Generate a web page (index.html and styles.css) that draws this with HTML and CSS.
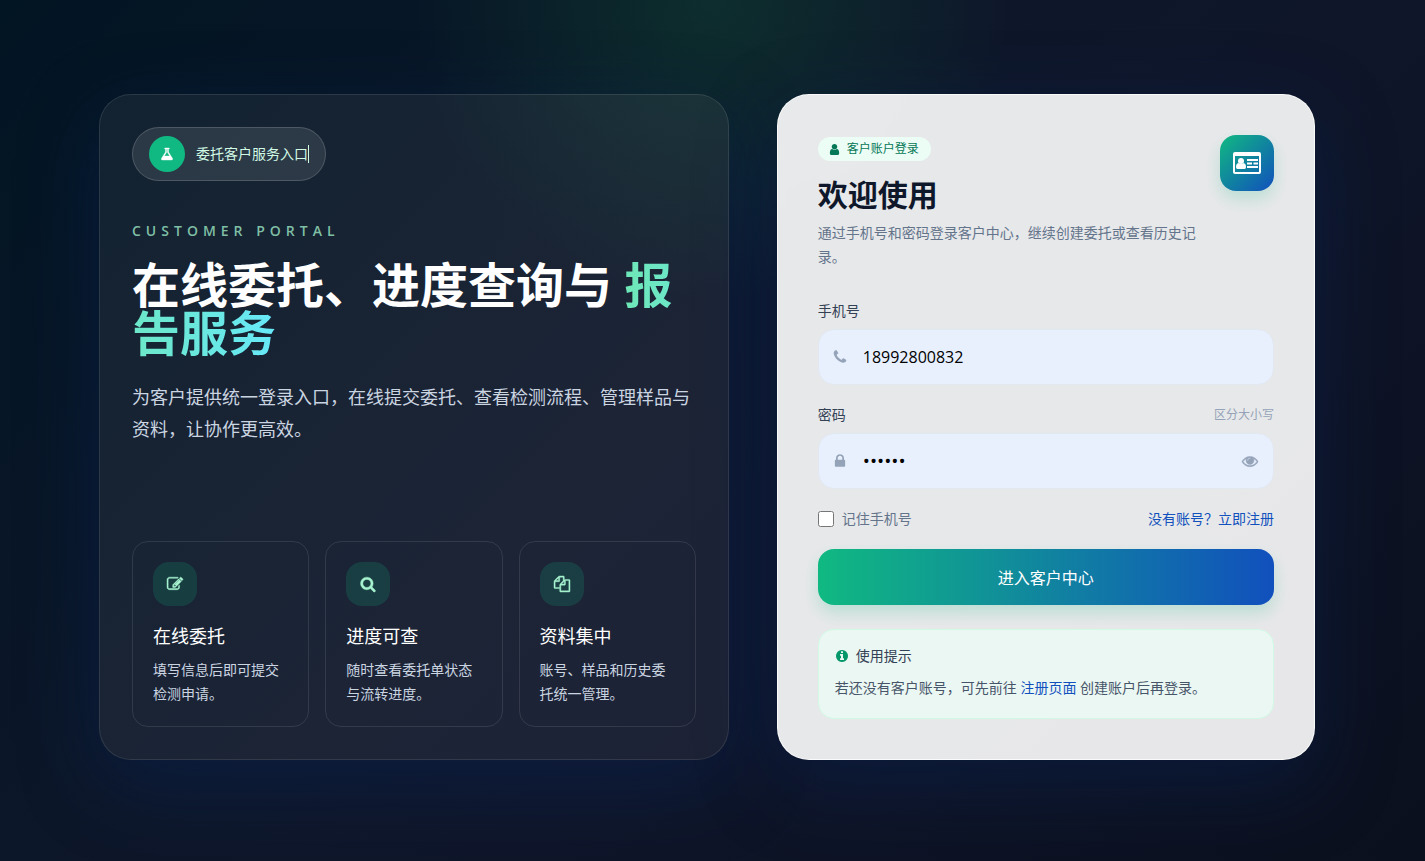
FILE: index.html
```html
<!DOCTYPE html>
<html lang="zh-CN">

<head>
    <meta charset="UTF-8">
    <meta name="viewport" content="width=device-width, initial-scale=1.0">
    <title>客户账户登录</title>
    <link rel="stylesheet" href="styles.css">
</head>

<body>
    <main class="page">
        <section class="intro">
            <div>
                <div class="badge">
                    <span class="badge-icon">
                        <svg class="icon icon-bold" viewBox="0 0 1792 1792"><path d="M1591 1448q56 89 21.5 152.5t-140.5 63.5h-1152q-106 0-140.5-63.5t21.5-152.5l503-793v-399h-64q-26 0-45-19t-19-45 19-45 45-19h512q26 0 45 19t19 45-19 45-45 19h-64v399zm-779-725l-272 429h712l-272-429-20-31v-436h-128v436z"/></svg>
                    </span>
                    <span class="typing">委托客户服务入口</span>
                </div>
                <p class="eyebrow">CUSTOMER PORTAL</p>
                <h1 class="headline">在线委托、进度查询与 <span class="headline-accent">报告服务</span></h1>
                <p class="lead">为客户提供统一登录入口，在线提交委托、查看检测流程、管理样品与资料，让协作更高效。</p>
            </div>

            <div class="features">
                <article class="feature">
                    <div class="feature-icon">
                        <svg class="icon icon-bold" viewBox="0 0 1792 1792"><path d="M888 1184l116-116-152-152-116 116v56h96v96h56zm440-720q-16-16-33 1l-350 350q-17 17-1 33t33-1l350-350q17-17 1-33zm80 594v190q0 119-84.5 203.5t-203.5 84.5h-832q-119 0-203.5-84.5t-84.5-203.5v-832q0-119 84.5-203.5t203.5-84.5h832q63 0 117 25 15 7 18 23 3 17-9 29l-49 49q-14 14-32 8-23-6-45-6h-832q-66 0-113 47t-47 113v832q0 66 47 113t113 47h832q66 0 113-47t47-113v-126q0-13 9-22l64-64q15-15 35-7t20 29zm-96-738l288 288-672 672h-288v-288zm444 132l-92 92-288-288 92-92q28-28 68-28t68 28l152 152q28 28 28 68t-28 68z"/></svg>
                    </div>
                    <h2 class="feature-title">在线委托</h2>
                    <p class="feature-text">填写信息后即可提交检测申请。</p>
                </article>
                <article class="feature">
                    <div class="feature-icon">
                        <svg class="icon icon-bold" viewBox="0 0 1792 1792"><path d="M1216 832q0-185-131.5-316.5t-316.5-131.5-316.5 131.5-131.5 316.5 131.5 316.5 316.5 131.5 316.5-131.5 131.5-316.5zm512 832q0 52-38 90t-90 38q-54 0-90-38l-343-342q-179 124-399 124-143 0-273.5-55.5t-225-150-150-225-55.5-273.5 55.5-273.5 150-225 225-150 273.5-55.5 273.5 55.5 225 150 150 225 55.5 273.5q0 220-124 399l343 343q37 37 37 90z"/></svg>
                    </div>
                    <h2 class="feature-title">进度可查</h2>
                    <p class="feature-text">随时查看委托单状态与流转进度。</p>
                </article>
                <article class="feature">
                    <div class="feature-icon">
                        <svg class="icon icon-bold" viewBox="0 0 1792 1792"><path d="M1696 384q40 0 68 28t28 68v1216q0 40-28 68t-68 28h-960q-40 0-68-28t-28-68v-288h-544q-40 0-68-28t-28-68v-672q0-40 20-88t48-76l408-408q28-28 76-48t88-20h416q40 0 68 28t28 68v328q68-40 128-40h416zm-544 213l-299 299h299v-299zm-640-384l-299 299h299v-299zm196 647l316-316v-416h-384v416q0 40-28 68t-68 28h-416v640h512v-256q0-40 20-88t48-76zm956 804v-1152h-384v416q0 40-28 68t-68 28h-416v640h896z"/></svg>
                    </div>
                    <h2 class="feature-title">资料集中</h2>
                    <p class="feature-text">账号、样品和历史委托统一管理。</p>
                </article>
            </div>
        </section>

        <section class="login">
            <header class="login-header">
                <div>
                    <span class="pill">
                        <svg class="icon" viewBox="0 0 1792 1792"><path d="M1536 1399q0 109-62.5 187t-150.5 78h-854q-88 0-150.5-78t-62.5-187q0-85 8.5-160.5t31.5-152 58.5-131 94-89 134.5-34.5q131 128 313 128t313-128q76 0 134.5 34.5t94 89 58.5 131 31.5 152 8.5 160.5zm-256-887q0 159-112.5 271.5t-271.5 112.5-271.5-112.5-112.5-271.5 112.5-271.5 271.5-112.5 271.5 112.5 112.5 271.5z"/></svg>
                        客户账户登录
                    </span>
                    <h2 class="login-title">欢迎使用</h2>
                    <p class="login-desc">通过手机号和密码登录客户中心，继续创建委托或查看历史记录。</p>
                </div>
                <div class="login-logo">
                    <svg class="logo-icon" viewBox="0 0 28 22">
                        <path fill-rule="evenodd" d="M2 0h24a2 2 0 0 1 2 2v18a2 2 0 0 1-2 2H2a2 2 0 0 1-2-2V2a2 2 0 0 1 2-2zM2 4v15.500q0 .5.5.5h23q.5 0 .5-.5V4z"/>
                        <circle cx="8" cy="9" r="3"/>
                        <path d="M5.500 11Q8 13 10.500 11 13 11.500 13 15 13 17 11.500 17H4.500Q3 17 3 15 3 11.500 5.500 11z"/>
                        <path d="M14 7h11v2H14zM14 10.500h5v2h-5zM20.500 10.500H25v2h-4.500zM14 14h11v2H14z"/>
                    </svg>
                </div>
            </header>

            <form class="form">
                <div class="field">
                    <label class="label" for="phone">手机号</label>
                    <div class="control">
                        <svg class="icon control-icon" viewBox="0 0 1792 1792"><path d="M1600 1240q0 27-10 70.5t-21 68.5q-21 50-122 106-94 51-186 51-27 0-53-3.5t-57.5-12.5-47-14.5-55.5-20.5-49-18q-98-35-175-83-127-79-264-216t-216-264q-48-77-83-175-3-9-18-49t-20.5-55.5-14.5-47-12.5-57.5-3.5-53q0-92 51-186 56-101 106-122 25-11 68.5-21t70.5-10q14 0 21 3 18 6 53 76 11 19 30 54t35 63.5 31 53.5q3 4 17.5 25t21.5 35.5 7 28.5q0 20-28.5 50t-62 55-62 53-28.5 46q0 9 5 22.5t8.5 20.5 14 24 11.500 19q76 137 174 235t235 174q2 1 19 11.500t24 14 20.500 8.500 22.500 5q18 0 46-28.500t53-62 55-62 50-28.500q14 0 28.500 7t35.500 21.500 25 17.500q25 15 53.500 31t63.500 35 54 30q70 35 76 53 3 7 3 21z"/></svg>
                        <input class="input" type="tel" id="phone" name="phone" value="18992800832">
                    </div>
                </div>

                <div class="field">
                    <div class="label-row">
                        <label class="label" for="password">密码</label>
                        <span class="hint">区分大小写</span>
                    </div>
                    <div class="control">
                        <svg class="icon control-icon" viewBox="0 0 1792 1792"><path d="M640 768h512v-192q0-106-75-181t-181-75-181 75-75 181v192zm832 96v576q0 40-28 68t-68 28h-960q-40 0-68-28t-28-68v-576q0-40 28-68t68-28h32v-192q0-184 132-316t316-132 316 132 132 316v192h32q40 0 68 28t28 68z"/></svg>
                        <input class="input input-password" type="password" id="password" name="password" value="123456">
                        <button class="toggle" type="button" aria-label="显示密码">
                            <svg class="icon icon-bold" viewBox="0 0 1792 1792"><path d="M1664 960q-152-236-381-353 61 104 61 225 0 185-131.5 316.5t-316.5 131.5-316.5-131.5-131.5-316.5q0-121 61-225-229 117-381 353 133 205 333.5 326.5t434.5 121.5 434.5-121.5 333.5-326.5zm-720-384q0-20-14-34t-34-14q-125 0-214.5 89.5t-89.5 214.5q0 20 14 34t34 14 34-14 14-34q0-86 61-147t147-61q20 0 34-14t14-34zm848 384q0 34-20 69-140 230-376.5 368.5t-499.5 138.5-499.5-139-376.5-368q-20-35-20-69t20-69q140-229 376.5-368t499.5-139 499.5 139 376.5 368q20 35 20 69z"/></svg>
                        </button>
                    </div>
                </div>

                <div class="options">
                    <label class="remember" for="remember">
                        <input class="checkbox" type="checkbox" id="remember" name="remember">
                        记住手机号
                    </label>
                    <a class="link" href="#">没有账号？立即注册</a>
                </div>

                <button class="submit" type="submit">进入客户中心</button>
            </form>

            <div class="tip">
                <div class="tip-title">
                    <svg class="icon" viewBox="0 0 1792 1792"><path d="M1152 1376v-160q0-14-9-23t-23-9h-96v-512q0-14-9-23t-23-9h-320q-14 0-23 9t-9 23v160q0 14 9 23t23 9h96v320h-96q-14 0-23 9t-9 23v160q0 14 9 23t23 9h448q14 0 23-9t9-23zm-128-896v-160q0-14-9-23t-23-9h-192q-14 0-23 9t-9 23v160q0 14 9 23t23 9h192q14 0 23-9t9-23zm640 416q0 209-103 385.5t-279.5 279.5-385.5 103-385.5-103-279.5-279.5-103-385.5 103-385.5 279.5-279.5 385.5-103 385.5 103 279.5 279.5 103 385.5z"/></svg>
                    使用提示
                </div>
                <p class="tip-text">若还没有客户账号，可先前往 <a class="link" href="#">注册页面</a> 创建账户后再登录。</p>
            </div>
        </section>
    </main>
</body>

</html>
```
FILE: styles.css
```css
* {
    box-sizing: border-box;
}

body {
    margin: 0;
    min-height: 100vh;
    font-family: "Open Sans", "Noto Sans CJK SC", sans-serif;
    font-size: 14px;
    line-height: 20px;
    color: #0f172a;
    background:
        radial-gradient(circle at 50% 0, rgba(20, 100, 60, 0.3), transparent 300px),
        linear-gradient(135deg, #021523, #0e172a 45%, #0f162a 60%, #0b101e);
}

h1,
h2,
p {
    margin: 0;
}

.page {
    display: grid;
    grid-template-columns: 1.17fr 1fr;
    gap: 48px;
    align-content: center;
    max-width: 1303px;
    min-height: 100vh;
    margin: 0 auto;
    padding: 32px 49px 39px 38px;
}

.icon {
    display: block;
    flex: none;
    width: 14px;
    height: 14px;
    fill: currentColor;
}

.icon-bold {
    stroke: currentColor;
    stroke-width: 50;
    overflow: visible;
}

/* left panel */
.intro {
    display: flex;
    flex-direction: column;
    justify-content: space-between;
    padding: 32px;
    border: 1px solid rgba(255, 255, 255, 0.1);
    border-radius: 32px;
    background: rgba(255, 255, 255, 0.06);
    box-shadow: 0 24px 80px rgba(8, 40, 100, 0.35);
}

.badge {
    display: inline-flex;
    align-items: center;
    gap: 11px;
    padding: 8px 16px;
    border: 1px solid rgba(255, 255, 255, 0.16);
    border-radius: 27px;
    background: rgba(255, 255, 255, 0.1);
}

.badge-icon {
    display: flex;
    align-items: center;
    justify-content: center;
    width: 36px;
    height: 36px;
    border-radius: 50%;
    color: #fff;
    background: #10b981;
}

/* right border is the typing caret */
.typing {
    border-right: 1px solid #d1fae5;
    line-height: 18px;
    color: #d1fae5;
}

.eyebrow {
    margin-top: 40px;
    font-size: 14px;
    font-weight: 600;
    letter-spacing: 5px;
    color: #7fbfa5;
}

.headline {
    margin-top: 20px;
    font-size: 48px;
    line-height: 48px;
    font-weight: 700;
    color: #fff;
}

.headline-accent {
    background: linear-gradient(90deg, #6ee7b7, #67e8f9);
    -webkit-background-clip: text;
    background-clip: text;
    color: transparent;
}

.lead {
    margin-top: 24px;
    font-size: 18px;
    line-height: 32px;
    color: #cbd5e1;
}

.features {
    display: grid;
    grid-template-columns: repeat(3, 1fr);
    gap: 16px;
}

.feature {
    padding: 20px;
    border: 1px solid rgba(255, 255, 255, 0.1);
    border-radius: 16px;
}

.feature-icon {
    display: flex;
    align-items: center;
    justify-content: center;
    width: 44px;
    height: 44px;
    border-radius: 16px;
    color: #a7f3d0;
    background: rgba(16, 185, 129, 0.18);
}

.feature-icon .icon {
    width: 16px;
    height: 16px;
}

.feature-title {
    margin-top: 16px;
    font-size: 18px;
    line-height: 28px;
    font-weight: 400;
    color: #fff;
}

.feature-text {
    margin-top: 8px;
    line-height: 24px;
    color: #cbd5e1;
}

/* right panel */
.login {
    padding: 40px;
    border: 1px solid rgba(255, 255, 255, 0.8);
    border-radius: 32px;
    background: rgba(255, 255, 255, 0.9);
    box-shadow: 0 24px 80px rgba(8, 40, 100, 0.35);
}

.login-header {
    display: flex;
    align-items: flex-start;
    justify-content: space-between;
    gap: 16px;
    margin-bottom: 32px;
}

.pill {
    display: inline-flex;
    align-items: center;
    gap: 6px;
    margin-top: 2px;
    padding: 2px 12px 2px 10px;
    border-radius: 12px;
    font-size: 12px;
    color: #047857;
    background: #ecfdf5;
}

.pill .icon {
    width: 13px;
    height: 13px;
}

.login-title {
    margin-top: 16px;
    font-size: 30px;
    line-height: 36px;
    font-weight: 700;
}

.login-desc {
    margin-top: 8px;
    line-height: 24px;
    color: #64748b;
}

.login-logo {
    display: flex;
    flex: none;
    align-items: center;
    justify-content: center;
    width: 54px;
    height: 56px;
    border-radius: 16px;
    background: linear-gradient(135deg, #10b981, #1150bd);
    box-shadow: 0 8px 16px rgba(16, 185, 129, 0.2);
}

.logo-icon {
    width: 28px;
    height: 22px;
    fill: #fff;
}

.form {
    display: flex;
    flex-direction: column;
    gap: 20px;
}

.label {
    display: block;
    color: #334155;
}

.label-row {
    display: flex;
    align-items: center;
    justify-content: space-between;
}

.hint {
    font-size: 12px;
    color: #94a3b8;
}

.control {
    position: relative;
    margin-top: 8px;
}

.control-icon {
    position: absolute;
    top: 20px;
    left: 14px;
    width: 16px;
    height: 16px;
    color: #94a3b8;
}

.input {
    display: block;
    width: 100%;
    height: 56px;
    padding: 0 44px;
    border: 1px solid #e2e8f0;
    border-radius: 16px;
    font-family: inherit;
    font-size: 16px;
    color: #000;
    background: #e8f0fe;
}

.input-password {
    font-size: 19px;
}

.toggle {
    position: absolute;
    top: 12px;
    right: 8px;
    padding: 8px;
    border: 0;
    color: #94a3b8;
    background: none;
    cursor: pointer;
}

.toggle .icon {
    width: 16px;
    height: 16px;
}

.options {
    display: flex;
    align-items: center;
    justify-content: space-between;
}

.remember {
    display: flex;
    align-items: center;
    gap: 8px;
    color: #64748b;
}

.checkbox {
    width: 16px;
    height: 16px;
    margin: 0;
}

.link {
    color: #1150bd;
    text-decoration: none;
}

.submit {
    height: 56px;
    border: 0;
    border-radius: 16px;
    font-family: inherit;
    font-size: 16px;
    color: #fff;
    background: linear-gradient(90deg, #10b981, #1150bd);
    box-shadow: 0 8px 16px rgba(16, 185, 129, 0.2);
    cursor: pointer;
}

.tip {
    margin-top: 24px;
    padding: 16px;
    border: 1px solid #d1fae5;
    border-radius: 16px;
    background: #ebf7f3;
}

.tip-title {
    display: flex;
    align-items: center;
    gap: 7px;
    color: #334155;
}

.tip-title .icon {
    color: #059669;
}

.tip-text {
    margin-top: 8px;
    line-height: 28px;
    color: #475569;
}
```
